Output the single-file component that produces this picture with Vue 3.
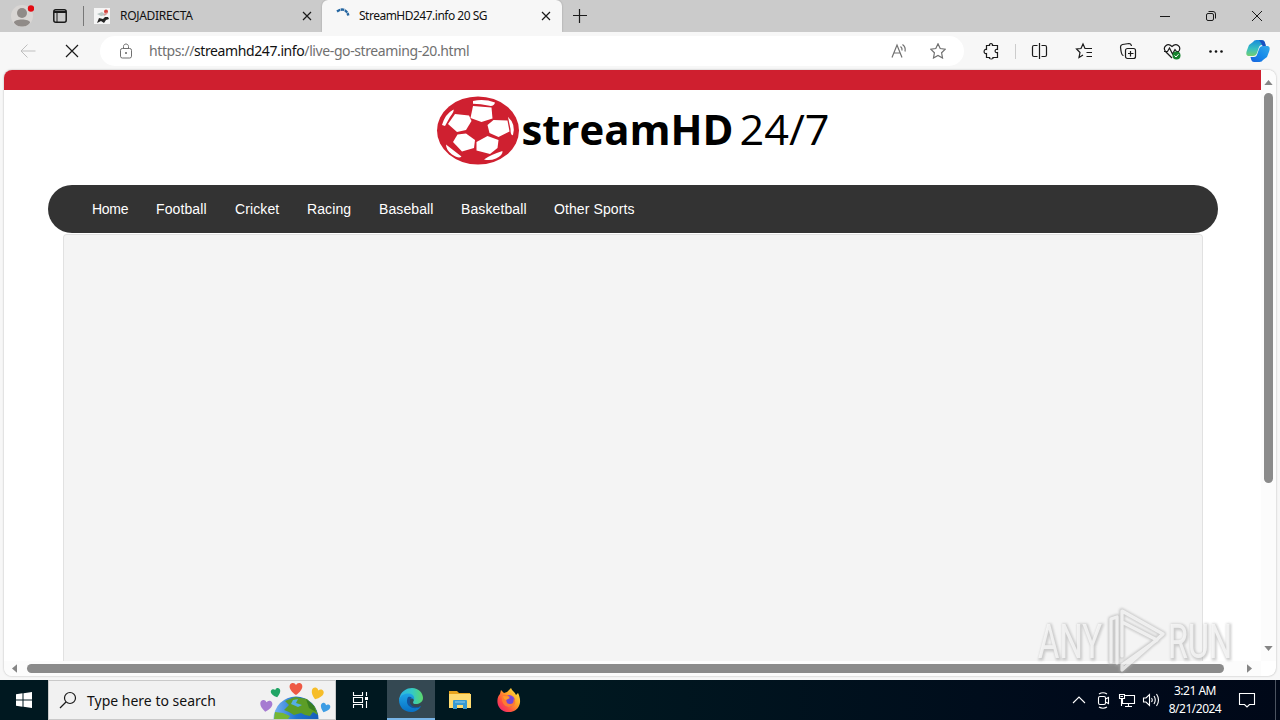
<template>
  <div class="desktop">
    <!-- tab strip -->
    <header class="tabs">
      <svg class="profile" viewBox="0 0 24 26">
        <circle cx="12" cy="14" r="11" fill="#d9d6d4" />
        <circle cx="12" cy="11" r="5" fill="#908b88" />
        <path d="M4 20.5C4 16.500 20 16.500 20 20.500C18 24 15 24.500 12 24.500S6 24 4 20.500Z" fill="#908b88" />
        <circle cx="21" cy="6.500" r="3.200" fill="#e30b13" />
      </svg>
      <svg class="workspaces" viewBox="0 0 14 14">
        <rect x=".8" y=".8" width="12.400" height="12.400" rx="2" class="line heavy" />
        <path d="M1 2.500H13M1 3.500H13M4 3V13" class="line" />
      </svg>
      <span class="rule"></span>
      <div class="tab">
        <svg class="favicon" viewBox="0 0 16 16">
          <rect width="16" height="16" fill="#f5f5f5" />
          <path d="M3 15L5 10L9 11L11 9H14L15 11L12 12L10 15L7 13Z" fill="#252525" />
          <path d="M3 6L8 4L12 7L7 8Z" fill="#b9c6c4" />
          <circle cx="12" cy="3.500" r="2" fill="#d5433d" />
          <path d="M10 7L13 5" stroke="#d99" stroke-width="2" />
        </svg>
        <span class="title roja">ROJADIRECTA</span>
        <svg class="close" viewBox="0 0 10 10"><path d="M1 1L9 9M9 1L1 9" class="line bold" /></svg>
      </div>
      <div class="tab active">
        <svg class="favicon" viewBox="0 0 16 16">
          <path d="M2 3.400C7 -.1 12 1.500 13.300 7.500" fill="none" stroke="#2465a0" stroke-width="2.400" stroke-dasharray="3.500 .6" />
        </svg>
        <span class="title stream">StreamHD247.info 20 SG</span>
        <svg class="close" viewBox="0 0 10 10"><path d="M1 1L9 9M9 1L1 9" class="line bold" /></svg>
      </div>
      <svg class="plus" viewBox="0 0 14 14"><path d="M6.500 0V14M0 6.500H14" class="line bold" /></svg>
      <div class="window-buttons">
        <svg viewBox="0 0 12 12"><path d="M1 6.500H11" class="line" /></svg>
        <svg viewBox="0 0 12 12">
          <rect x="1.500" y="3.500" width="7" height="7" rx="1.500" class="line" />
          <path d="M3.500 1.500H8Q10.500 1.500 10.500 4V8.500" class="line" />
        </svg>
        <svg viewBox="0 0 12 12"><path d="M1 1L11 11M11 1L1 11" class="line" /></svg>
      </div>
    </header>

    <!-- toolbar -->
    <div class="toolbar">
      <svg class="back" viewBox="0 0 16 16"><path d="M15.500 8H1M7.500 1.500L1 8L7.500 14.500" class="line" /></svg>
      <svg class="stop" viewBox="0 0 14 14"><path d="M1 1L13 13M13 1L1 13" class="line bold" /></svg>
      <div class="address">
        <svg class="lock" viewBox="0 0 14 16">
          <rect x="1.500" y="5.500" width="11" height="9.500" rx="1.800" class="line" />
          <path d="M4.500 5V3.500C4.500 .2 9.500 .2 9.500 3.500V5" class="line" />
          <circle cx="7" cy="10" r="1" fill="#666" />
        </svg>
        <span class="url">https://<b>streamhd247.info</b>/live-go-streaming-20.html</span>
        <svg class="read" viewBox="0 0 16 16">
          <path d="M1 14.500L6 2L11 14.500M2.800 10H9.200M9.500 3.500Q11.500 5 11 7.500M11.500 1.500Q15 4 14 8.500" class="line bold" />
        </svg>
        <svg class="star" viewBox="0 0 16 16"><path :d="star" class="line bold" /></svg>
      </div>
      <div class="actions">
        <svg viewBox="0 0 18 18">
          <path d="M4.500 3.500H7.500C6.500 1 11.500 1 10.500 3.500H15.500V7.500C12.300 6.300 12.300 11.700 15.500 10.500V15.500H11C12 17.500 6.500 17.500 7.500 15.500H4.500V11.500C1.300 12.500 1.300 6.500 4.500 7.500Z" class="line bold" />
        </svg>
        <span class="rule light"></span>
        <svg viewBox="0 0 18 18">
          <path d="M6.500 3.500H3Q1.500 3.500 1.500 5V13Q1.500 14.500 3 14.500H6.500M10.500 3.500H14Q15.500 3.500 15.500 5V13Q15.500 14.500 14 14.500H10.500M8.500 1V17" class="line bold" />
        </svg>
        <svg viewBox="0 0 18 18">
          <path d="M11 6.500H10L8 2L6 6.500L1.500 7L5 10.500L4 15.500L8 13M11 6.500H17M11.500 10.500H17M11.500 14.500H17" class="line bold" />
        </svg>
        <svg viewBox="0 0 18 18">
          <rect x="6.500" y="6.500" width="10" height="10" rx="2" class="line bold" />
          <path d="M4.500 13.500C3 13.500 2.500 12 2 9L1.500 5Q1.500 3 3.500 2.500L10 1.500Q12 1.500 12.500 4M11.500 9V14.500M9 11.500H14.500" class="line bold" />
        </svg>
        <svg viewBox="0 0 18 18">
          <path d="M9 16L2.500 9.500C-.8 5 4.500 .3 9 4.500C13.500 .3 18.500 4.500 16 9M1 9.500H4.500L6.500 6L9.500 12L12 7.500L13.500 9.500H16" class="line bold" />
          <circle cx="13.500" cy="13.500" r="4" fill="#16822d" />
          <path d="M11.500 13.500L13 15L15.500 12.200" fill="none" stroke="#fff" />
        </svg>
        <svg viewBox="0 0 18 18">
          <circle v-for="x in [3.500, 9, 14.500]" :key="x" :cx="x" cy="9.500" r="1.300" fill="#111" />
        </svg>
      </div>
      <svg class="copilot" viewBox="0 0 24 24">
        <defs>
          <linearGradient id="copLeft" x1="0" y1="0" x2="0" y2="1">
            <stop offset="0" stop-color="#1789dc" />
            <stop offset=".55" stop-color="#38bfc1" />
            <stop offset="1" stop-color="#73cf70" />
          </linearGradient>
          <linearGradient id="copRight" x1="0" y1="1" x2="1" y2="0">
            <stop offset="0" stop-color="#1860dd" />
            <stop offset=".5" stop-color="#168bea" />
            <stop offset="1" stop-color="#35a9e8" />
          </linearGradient>
        </defs>
        <path d="M7 3Q8 1 10.500 1H16Q18 1 18.700 3L19.500 6H16Q13.500 6 12.700 9L11 14Q10 17 7 17H3C0 17 0 14.500 .7 12L3 6Z" fill="url(#copLeft)" />
        <path d="M17 21Q16 23 13.500 23H8Q6 23 5.300 21L4.500 18H8Q10.500 18 11.300 15L13 10Q14 7 17 7H21C24 7 24 9.500 23.300 12L21 18Z" fill="url(#copRight)" />
        <path d="M15 1.200Q18 1 18.700 3L20 7H16.500Q15.500 4 13 1Z" fill="#1b4fc0" />
      </svg>
    </div>

    <!-- web page -->
    <main class="viewport">
      <div class="site">
        <div class="redbar"></div>
        <svg class="logo" viewBox="0 0 400 95">
          <defs>
            <clipPath id="ball"><ellipse cx="45" cy="40.500" rx="41" ry="34" /></clipPath>
          </defs>
          <ellipse cx="45" cy="40.500" rx="41" ry="34" fill="#cf2030" />
          <g clip-path="url(#ball)" fill="#fff">
            <path v-for="(d, i) in patches" :key="i" :d="d" />
          </g>
          <text x="88.500" y="55" textLength="212" lengthAdjust="spacingAndGlyphs" class="logo-name">streamHD</text>
          <text x="306.500" y="55" textLength="90" lengthAdjust="spacingAndGlyphs" class="logo-hours">24/7</text>
        </svg>
        <nav class="menu">
          <a v-for="item in menu" :key="item.label" :style="{ width: item.width + 'px' }">{{ item.label }}</a>
        </nav>
        <section class="well"></section>
      </div>
      <div class="vscroll">
        <svg viewBox="0 0 10 6"><path d="M0 6L5 0L10 6Z" /></svg>
        <div class="vthumb"></div>
        <svg viewBox="0 0 10 6"><path d="M0 0L5 6L10 0Z" /></svg>
      </div>
      <div class="hscroll">
        <svg viewBox="0 0 6 10"><path d="M6 0L0 5L6 10Z" /></svg>
        <div class="hthumb"></div>
        <svg viewBox="0 0 6 10"><path d="M0 0L6 5L0 10Z" /></svg>
      </div>
    </main>

    <!-- taskbar -->
    <footer class="taskbar">
      <div class="start">
        <svg viewBox="0 0 16 16"><path d="M0 2.200L6.500 1.300V7.500H0ZM7.500 1.200L16 0V7.500H7.500ZM0 8.500H6.500V14.700L0 13.800ZM7.500 8.500H16V16L7.500 14.800Z" fill="#fff" /></svg>
      </div>
      <div class="search">
        <svg class="lens" viewBox="0 0 18 18"><circle cx="11" cy="7" r="5.500" class="line bold" /><path d="M7 11L1 17" class="line bold" /></svg>
        <span>Type here to search</span>
        <svg class="globe" viewBox="0 0 74 38">
          <defs>
            <linearGradient id="sea" x1="0" x2="1"><stop offset="0" stop-color="#79b4f4" /><stop offset=".5" stop-color="#2174d0" /><stop offset="1" stop-color="#165db9" /></linearGradient>
          </defs>
          <circle cx="37" cy="38" r="22.500" fill="url(#sea)" />
          <path d="M26 20L36 16L48 18L56 26L59 34L54 31L51 35L46 34L42 32L35 34L30 31L25 29L30 24Z" fill="#5c9d26" />
          <path d="M16 31L24 32L31 35L29 38H15Z" fill="#75b633" />
          <path d="M34 19L39 18L37 22L43 24L39 26L32 23Z" fill="#56aee5" />
          <path d="M47 18L55 25L57 31L50 27Z" fill="#377e20" />
          <path v-for="h in hearts" :key="h.color" :d="heart" :fill="h.color" :transform="`translate(${h.x} ${h.y}) rotate(${h.turn}) scale(${h.size})`" />
        </svg>
      </div>
      <div class="app tasks">
        <svg class="taskview" viewBox="0 0 18 18">
          <path d="M2.500 1V4.500H11.500V1M2.500 17V13.500H11.500V17M2.500 6.500H11.500V11.500H2.500ZM15.500 1V5M15.500 10V17" />
          <path d="M14 6H17V9H14Z" fill="#fff" stroke="none" />
        </svg>
      </div>
      <div class="app current">
        <svg class="edge" viewBox="0 0 24 24">
          <defs>
            <linearGradient id="edgeTop" x1="0" x2="1"><stop offset="0" stop-color="#29b3e8" /><stop offset=".55" stop-color="#35c9c4" /><stop offset="1" stop-color="#5bd86b" /></linearGradient>
            <linearGradient id="edgeBody" x1="0" y1="0" x2="0" y2="1"><stop offset="0" stop-color="#1fa5e6" /><stop offset="1" stop-color="#0870c5" /></linearGradient>
          </defs>
          <path d="M0 12C1 3 8 0 13 0C20 .5 24 5 24 10C24 14 20 16 17 16C13 16 14 14 15 12C14 7 6 5 0 12Z" fill="url(#edgeTop)" />
          <path d="M0 12C1 7 6 5 10 5.500C14 6 16 9 15 12C13 9 9 11 9 15C10 20 17 21 22 18C20 22 16 24 12 24C5 24 0 19 0 12Z" fill="url(#edgeBody)" />
          <path d="M8.500 10C6 17 12 21 18 20C21 20 22 18 22 18C17 21 10 18 11 13C11 11 12 10 13 10C11 8 9 9 8.500 10Z" fill="#12539d" />
        </svg>
      </div>
      <div class="app">
        <svg class="folder" viewBox="0 0 22 20">
          <path d="M0 1H8L10 3H21V18H0Z" fill="#e8a51d" />
          <path d="M0 4H22V18H0Z" fill="#ffdb70" />
          <path d="M4 19V11Q4 10 5 10H17Q18 10 18 11V19H14V15H8V19Z" fill="#3799d1" />
          <path d="M6 12H16" stroke="#8dccef" />
        </svg>
      </div>
      <div class="app">
        <svg class="firefox" viewBox="0 0 24 24">
          <defs>
            <linearGradient id="fire" x1="1" y1="0" x2="0" y2="1"><stop offset="0" stop-color="#fff14a" /><stop offset=".4" stop-color="#ffa526" /><stop offset=".7" stop-color="#ff4b43" /><stop offset="1" stop-color="#e31587" /></linearGradient>
          </defs>
          <path d="M3 6L4 2L7 5L10 4L14 0C15 3 18 4 19 7L21 5C25 13 23 20 17 23C11 26 3 23 1 17C-.5 12 1 8 3 6Z" fill="url(#fire)" />
          <circle cx="12" cy="13" r="6" fill="#8146df" />
          <path d="M5 7L10 7L13 9L9 12L12 13C14 14 17 12 17 10C20 15 17 19 12 19C7 19 4 14 5 7Z" fill="#ff7a31" />
          <circle cx="13" cy="12.500" r="3.600" fill="#7448d8" />
          <path d="M6 8L11 8.500L13 10L9 12L7 11Z" fill="#ff9b2b" />
        </svg>
      </div>
      <div class="tray">
        <svg viewBox="0 0 18 18"><path d="M3 12L9 6L15 12" /></svg>
        <svg viewBox="0 0 18 18"><rect x="4.500" y="5.500" width="7" height="8" rx="1.500" /><path d="M11.500 8L14.500 6.500V12.500L11.500 11M5 3Q9 .5 13 3M5 16Q9 18.500 13 16" /></svg>
        <svg viewBox="0 0 18 18"><path d="M6.500 4.500H16.500V12.500H4.500V8M10.500 12.500V15.500M7 15.500H14M1.500 3.500H6.500V7.500H1.500ZM3.500 7.500V15M2.500 5.500H5" /></svg>
        <svg viewBox="0 0 18 18"><path d="M1.500 7H4L7.500 3.500V14.500L4 11H1.500ZM9.500 7Q11 9 9.500 11M12 5Q14.500 9 12 13M14.500 3Q18.500 9 14.500 15" /></svg>
      </div>
      <div class="clock">
        <span class="time">3:21 AM</span>
        <span class="date">8/21/2024</span>
      </div>
      <svg class="notice" viewBox="0 0 18 18"><path d="M1.500 2.500H16.500V13.500H11.500L9 16L6.500 13.500H1.500Z" /></svg>
      <span class="peek"></span>
    </footer>

    <svg class="watermark" viewBox="0 0 200 68">
      <g class="wm-shade">
        <text x="3" y="53" textLength="64" lengthAdjust="spacingAndGlyphs">ANY</text>
        <text x="133" y="53" textLength="64" lengthAdjust="spacingAndGlyphs">RUN</text>
        <path :d="playMark" />
      </g>
      <g class="wm-light">
        <text x="2" y="52" textLength="64" lengthAdjust="spacingAndGlyphs">ANY</text>
        <text x="132" y="52" textLength="64" lengthAdjust="spacingAndGlyphs">RUN</text>
        <path :d="playMark" />
      </g>
    </svg>
  </div>
</template>

<script setup>
const star = 'M8 .8L10.200 5.500L15.300 6.200L11.600 9.800L12.500 15L8 12.500L3.500 15L4.400 9.800L.7 6.200L5.800 5.500Z'
const heart = 'M0 6C-9 0 -7 -6 -3 -6Q-1 -6 0 -4Q1 -6 3 -6C7 -6 9 0 0 6Z'
const playMark = 'M75 56V13L81 11V57M86 50V5L127 28L86 64V59L121 34M88 17L121 34'

const menu = [
  { label: 'Home', width: 64 },
  { label: 'Football', width: 79 },
  { label: 'Cricket', width: 72 },
  { label: 'Racing', width: 72 },
  { label: 'Baseball', width: 82 },
  { label: 'Basketball', width: 93 },
  { label: 'Other Sports', width: 110 }
]

// white panels of the football
const patches = [
  'M40 16L58.500 17.500L59.500 28.500L48.500 32L37.500 28Z',
  'M22 24L36 25.500L38.500 31L33 40L24 42L15 34Z',
  'M60.500 30L74.500 30.500L76.500 41.500L65.500 47L56.500 43L54.500 35Z',
  'M24.500 44.500L33 43.500L42 50L41 58L29 61.500L20 52Z',
  'M43.500 52L54.500 46L65.500 50L64.500 58L57 64L43.500 60.500Z',
  'M40 11Q51 8.500 62 12.500Q61 17 55 15.500Q48 14 40 13.800Z',
  'M9 35Q12 24 20.500 19.500Q21.500 21 17 27L12 36Z',
  'M75 27Q83 34 80 45Q77.500 46 77.500 39Z',
  'M13 54.500Q20 60 28.500 66.500Q26 69 19 64.500Q13 60 13 54.500Z',
  'M51 69.500Q57 65 69.500 61Q70 65 63 68.500Q57 71 51 69.500Z'
]

const hearts = [
  { x: 7, y: 25, turn: 8, size: 0.95, color: '#a67bd1' },
  { x: 17, y: 12, turn: -15, size: 0.75, color: '#20a464' },
  { x: 37, y: 8, turn: 0, size: 1, color: '#ee5944' },
  { x: 58, y: 13, turn: 20, size: 0.95, color: '#f6bd28' },
  { x: 66, y: 27, turn: 20, size: 0.75, color: '#3c9ce4' }
]
</script>

<style>
body {
  overflow: hidden;
}
</style>

<style scoped>
.desktop {
  position: relative;
  width: 1280px;
  height: 720px;
  display: flex;
  flex-direction: column;
  overflow: hidden;
  background: #f7f7f7;
  font-family: "Noto Sans", "Open Sans", sans-serif;
  color: #111;
}
svg {
  display: block;
  flex: none;
}
.line {
  fill: none;
  stroke: #1a1a1a;
  stroke-width: 1;
}
.bold {
  stroke-width: 1.2;
}
.heavy {
  stroke-width: 1.5;
}
/* tab strip */
.tabs {
  height: 32px;
  flex: none;
  display: flex;
  align-items: center;
  box-sizing: border-box;
  padding-left: 10px;
  background: #cbcbcb;
}
.profile {
  width: 24px;
  height: 26px;
  margin-top: -2px;
}
.workspaces {
  width: 14px;
  height: 14px;
  margin-left: 19px;
}
.rule {
  width: 1px;
  height: 20px;
  margin: 0 0 0 16px;
  background: #777;
}
.tab {
  display: flex;
  align-items: center;
  box-sizing: border-box;
  width: 238px;
  height: 32px;
  padding: 0 10px 0 10px;
}
.tab.active {
  width: 240px;
  padding: 0 11px 0 13px;
  background: #f7f7f7;
  border-radius: 6px 6px 0 0;
  box-shadow: 0 0 2px #999;
  clip-path: inset(0 -2px 0 -2px);
}
.favicon {
  width: 16px;
  height: 16px;
}
.title {
  flex: 1;
  margin-left: 10px;
  font-size: 12px;
  line-height: 16px;
  white-space: nowrap;
}
.roja {
  letter-spacing: -0.3px;
}
.stream {
  margin-left: 8px;
  letter-spacing: -0.5px;
}
.close {
  width: 10px;
  height: 10px;
}
.plus {
  width: 14px;
  height: 14px;
  margin-left: 11px;
}
.window-buttons {
  display: flex;
  gap: 34px;
  margin-left: auto;
  padding-right: 17px;
}
.window-buttons svg {
  width: 12px;
  height: 12px;
}
/* toolbar */
.toolbar {
  height: 38px;
  flex: none;
  display: flex;
  align-items: center;
  box-sizing: border-box;
  padding: 0 9px 0 20px;
}
.back {
  width: 16px;
  height: 16px;
  opacity: 0.25;
}
.stop {
  width: 14px;
  height: 14px;
  margin-left: 29px;
}
.address {
  display: flex;
  align-items: center;
  box-sizing: border-box;
  width: 864px;
  height: 30px;
  margin-left: 21px;
  padding: 0 18px 0 19px;
  border-radius: 15px;
  background: #fff;
}
.address .line {
  stroke: #707070;
}
.lock {
  width: 14px;
  height: 16px;
}
.url {
  margin-left: 16px;
  font-size: 14px;
  line-height: 20px;
  letter-spacing: -0.4px;
  white-space: nowrap;
  color: #707070;
}
.url b {
  font-weight: 400;
  color: #111;
}
.read {
  width: 16px;
  height: 16px;
  margin-left: auto;
}
.star {
  width: 16px;
  height: 16px;
  margin-left: 23px;
}
.actions {
  display: flex;
  align-items: center;
  margin-left: 18px;
}
.actions svg {
  width: 18px;
  height: 18px;
  margin-right: 26px;
}
.actions svg:first-child {
  margin-right: 0;
}
.rule.light {
  height: 15px;
  margin: 0 15px;
  background: #ccc;
}
.copilot {
  width: 24px;
  height: 24px;
  margin-left: -5px;
}
/* page */
.viewport {
  display: grid;
  grid-template-columns: 1257px 15px;
  grid-template-rows: 591px 15px;
  width: 1272px;
  height: 606px;
  margin-left: 4px;
  flex: none;
  overflow: hidden;
  border-radius: 8px;
  background: #fff;
  box-shadow: 0 0 2px #aaa;
}
.site {
  overflow: hidden;
  display: flex;
  flex-direction: column;
}
.redbar {
  height: 20px;
  flex: none;
  background: #cf1f2f;
}
.logo {
  width: 400px;
  height: 95px;
  margin-left: 429px;
}
.logo-name {
  font: 700 40.5px "Open Sans", sans-serif;
}
.logo-hours {
  font: 400 42px "Open Sans", sans-serif;
}
.menu {
  display: flex;
  align-items: center;
  flex: none;
  box-sizing: border-box;
  width: 1170px;
  height: 48px;
  margin-left: 44px;
  padding-left: 44px;
  border-radius: 24px;
  background: #333;
  font: 14px "Liberation Sans", Arial, sans-serif;
  letter-spacing: 0.1px;
  color: #fff;
}
.menu a {
  flex: none;
}
.menu a:first-child {
  letter-spacing: -0.3px;
}
.well {
  flex: 1;
  box-sizing: border-box;
  width: 1140px;
  margin: 1px 0 0 59px;
  border: 1px solid #e1e1e1;
  border-bottom: 0;
  border-radius: 4px 4px 0 0;
  background: #f4f4f4;
}
.vscroll,
.hscroll {
  display: flex;
  align-items: center;
  background: #fcfcfc;
  fill: #858585;
}
.vscroll {
  flex-direction: column;
  padding-top: 10px;
}
.vscroll svg {
  width: 9px;
  height: 5px;
}
.vthumb {
  width: 9px;
  height: 390px;
  margin: 8px 0 163px;
  border-radius: 5px;
  background: #8b8b8b;
}
.hscroll {
  padding-left: 8px;
}
.hscroll svg {
  width: 5px;
  height: 9px;
}
.hthumb {
  width: 1197px;
  height: 9px;
  margin: 0 23px 0 10px;
  border-radius: 5px;
  background: #8b8b8b;
}
/* taskbar */
.taskbar {
  display: flex;
  align-items: center;
  flex: none;
  height: 40px;
  margin-top: 4px;
  background: linear-gradient(90deg, #001820, #001820 45%, #000a1b 85%, #000818);
}
.start {
  width: 48px;
  display: flex;
  justify-content: center;
}
.start svg {
  width: 16px;
  height: 16px;
}
.search {
  display: flex;
  align-items: center;
  box-sizing: border-box;
  width: 288px;
  height: 40px;
  padding-left: 10px;
  overflow: hidden;
  border: 1px solid #c9c9c9;
  background: #f1f1f1;
  font-size: 14px;
}
.lens {
  width: 18px;
  height: 18px;
}
.search span {
  width: 174px;
  flex: none;
  margin-left: 10px;
}
.globe {
  width: 74px;
  height: 38px;
  margin-left: -2px;
}
.app {
  display: flex;
  align-items: center;
  justify-content: center;
  box-sizing: border-box;
  width: 49px;
  height: 40px;
}
.app.tasks {
  width: 51px;
  padding-right: 3px;
}
.app.current {
  width: 48px;
  background: #344852;
  border-bottom: 2px solid #78b5e7;
  padding-top: 2px;
}
.taskview {
  width: 18px;
  height: 18px;
}
.taskview,
.tray svg,
.notice {
  fill: none;
  stroke: #fff;
  stroke-width: 1.1;
}
.edge,
.firefox {
  width: 24px;
  height: 24px;
}
.folder {
  width: 22px;
  height: 20px;
}
.tray {
  display: flex;
  gap: 6px;
  margin-left: auto;
}
.tray svg {
  width: 18px;
  height: 18px;
}
.clock {
  display: flex;
  flex-direction: column;
  align-items: center;
  width: 70px;
  font-size: 12px;
  line-height: 18px;
  letter-spacing: -0.5px;
  white-space: nowrap;
  color: #fff;
}
.notice {
  width: 18px;
  height: 18px;
  margin-left: 8px;
}
.peek {
  width: 1px;
  height: 40px;
  margin: 0 4px 0 19px;
  background: #4b5360;
}
/* floats over the page and the scrollbar */
.watermark {
  position: absolute;
  left: 1036px;
  top: 606px;
  width: 200px;
  height: 68px;
  overflow: visible;
}
.watermark text {
  font: 400 48px "Roboto", sans-serif;
}
.watermark path {
  fill: none;
  stroke-linejoin: round;
  stroke-linecap: round;
}
.wm-shade {
  fill: #aaa;
  stroke: #aaa;
  stroke-width: 3;
  opacity: 0.55;
  filter: blur(1.2px);
}
.wm-shade path {
  stroke-width: 6;
}
.wm-light {
  fill: #fff;
  stroke: none;
  opacity: 0.7;
}
.wm-light path {
  stroke: #fff;
  stroke-width: 3.2;
}
</style>
